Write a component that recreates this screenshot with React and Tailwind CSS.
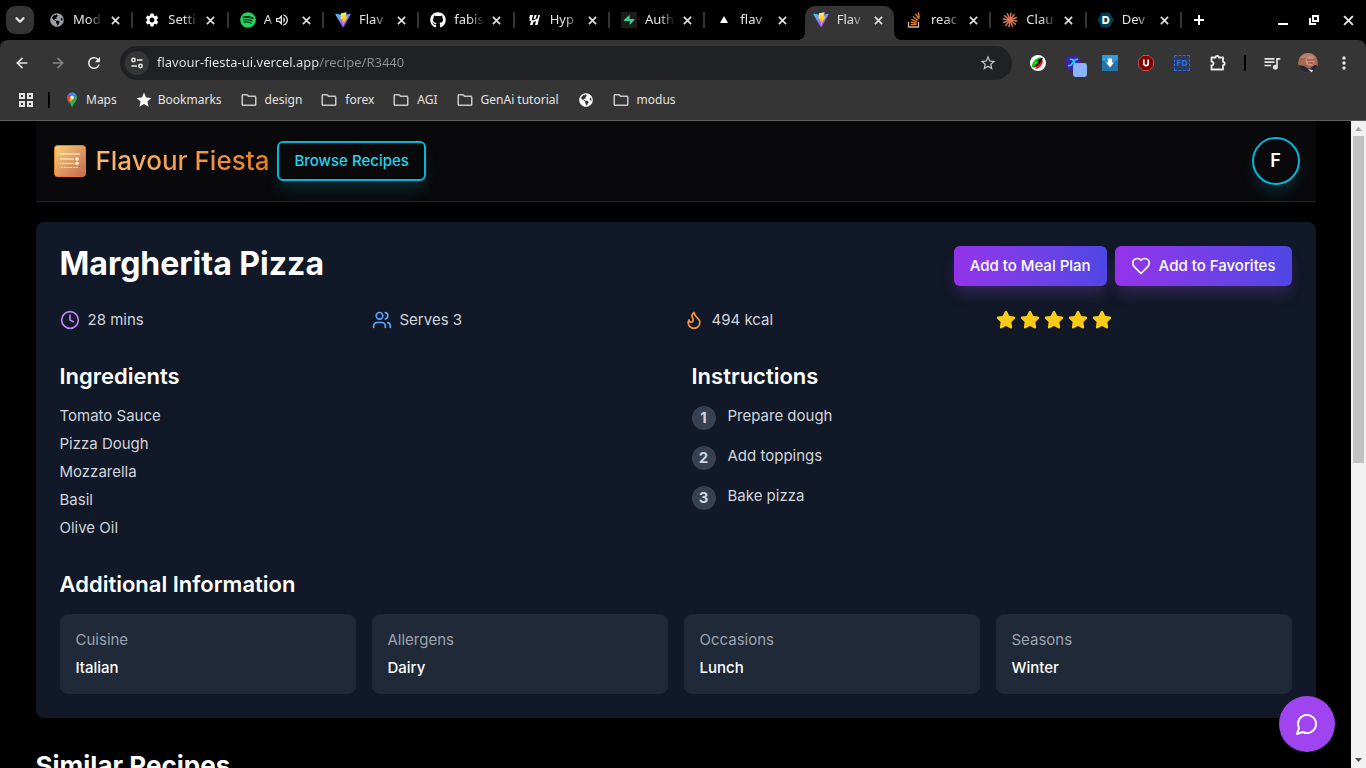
// recipe detail page shown inside a desktop browser window
import { Clock, Users, Flame, Star, ChevronDown, ArrowLeft, ArrowRight } from 'lucide-react';
import { FaSpotify, FaGithub, FaGlobeAmericas } from 'react-icons/fa';
import {
  MdSettings,
  MdRefresh,
  MdStar,
  MdStarBorder,
  MdOutlineFolder,
  MdQueueMusic,
  MdMoreVert,
  MdOutlineVolumeUp,
} from 'react-icons/md';

/* ---------- favicons and small logos ---------- */

function ViteLogo() {
  return (
    <svg viewBox="0 0 32 32" className="size-4">
      <defs>
        <linearGradient id="viteA" x1="0" y1="0" x2="0.6" y2="1">
          <stop offset="0" stopColor="#41d1ff" />
          <stop offset="1" stopColor="#bd34fe" />
        </linearGradient>
        <linearGradient id="viteB" x1="0.4" y1="0" x2="0.6" y2="1">
          <stop offset="0" stopColor="#ffea83" />
          <stop offset="0.3" stopColor="#ffdd35" />
          <stop offset="1" stopColor="#ffa800" />
        </linearGradient>
      </defs>
      <path d="M31.2 4.8 16.9 30.3a.8.8 0 0 1-1.4 0L.9 4.8a.8.8 0 0 1 .9-1.2l14.3 2.6 14.1-2.6a.8.8 0 0 1 1 1.2Z" fill="url(#viteA)" />
      <path d="M22.8.6 12.200 2.700a.4.4 0 0 0-.3.4l-.7 11a.4.4 0 0 0 .5.4l3-.7a.4.4 0 0 1 .5.5l-.9 4.300a.4.4 0 0 0 .5.5l1.800-.6a.4.4 0 0 1 .5.5l-1.400 6.800c-.1.4.5.7.7.3l8.700-17.200a.4.4 0 0 0-.4-.6l-3.100.6a.4.4 0 0 1-.4-.5l2-7a.4.4 0 0 0-.4-.5Z" fill="url(#viteB)" />
    </svg>
  );
}

function HypeLogo() {
  return (
    <svg viewBox="0 0 16 16" className="size-4" fill="#fff">
      <path d="M4 3h3L5.500 9H3.500l.6-2.500H3.100zM8 8l3.500-1.500L12.400 3H14l-2.500 10H9l1-4-2.600 1L6.600 13H4l1.200-4.200zM8.500 3h2.200L9.700 6.500 7.600 7.300z" />
    </svg>
  );
}

function SupabaseLogo() {
  return (
    <svg viewBox="0 0 16 16" className="size-4">
      <rect width="16" height="16" rx="1" fill="#1c1c1c" />
      <path d="M8.600 2.800v4.200h4.200c.6 0 .9.6.5 1L8.600 13V9H3.500c-.6 0-.9-.6-.5-1z" fill="#3ecf8e" />
    </svg>
  );
}

function VercelLogo() {
  return (
    <svg viewBox="0 0 16 16" className="size-4">
      <path d="M8 4l4 7H4z" fill="#fff" />
    </svg>
  );
}

function StackOverflowLogo() {
  return (
    <svg viewBox="0 0 16 16" className="size-4" fill="none" strokeWidth="1.300">
      <path d="M1.500 10v5h10v-5" stroke="#bcbbbb" />
      <path d="M3.500 12.500h6M3.600 10.200l6 1M4.300 7.300l5.600 2.300M5.900 4.500l4.900 3.700M8.500 2l3.700 4.900M11.200.500l1.200 5" stroke="#f48024" />
    </svg>
  );
}

const RAYS = [0, 30, 60, 90, 120, 150, 180, 210, 240, 270, 300, 330];

function ClaudeLogo() {
  return (
    <svg viewBox="0 0 16 16" className="size-4" stroke="#d97757" strokeWidth="1.500" strokeLinecap="round">
      {RAYS.map((deg) => (
        <line key={deg} x1="8" y1="8" x2="8" y2="1.200" transform={`rotate(${deg + 8} 8 8)`} />
      ))}
    </svg>
  );
}

function DevLogo() {
  return (
    <span className="flex size-4 items-center justify-center bg-[#003e54] font-['Inter'] text-[11px] font-extrabold text-white [clip-path:polygon(25%_5%,75%_5%,100%_50%,75%_95%,25%_95%,0_50%)]">
      D
    </span>
  );
}

function MapsPin() {
  return (
    <svg viewBox="0 0 16 16" className="size-4">
      <path d="M8 .5a5 5 0 0 1 5 5c0 4-3.500 5-5 10z" fill="#34a853" />
      <path d="M3.600 8C4.700 10.500 6.800 11.500 8 15.500c.8-3 2.400-4.500 3.600-6.200L8.500 6z" fill="#34a853" />
      <path d="M3.500 7.800 7 9.500l4-5-3-1z" fill="#fbbc04" />
      <path d="M3.600 8A5 5 0 0 1 4.200 2.300L8 5.500 4.500 9.500z" fill="#ea4335" />
      <path d="M4.200 2.300A5 5 0 0 1 12.300 3L9.500 6 8 5.500z" fill="#4285f4" />
      <circle cx="8" cy="5.500" r="1.700" fill="#fff" />
    </svg>
  );
}

function CloseIcon({ className }) {
  return (
    <svg viewBox="0 0 10 10" className={className} fill="none" stroke="currentColor" strokeWidth="1.800">
      <path d="M1 1l8 8M9 1L1 9" />
    </svg>
  );
}

const tabs = [
  { title: 'Mod', icon: <FaGlobeAmericas className="size-[14px] text-[#9aa0a6]" /> },
  { title: 'Setti', icon: <MdSettings className="size-4 text-white" /> },
  { title: 'A', icon: <FaSpotify className="size-4 text-[#1ed760]" />, audio: true },
  { title: 'Flav', icon: <ViteLogo /> },
  { title: 'fabis', icon: <FaGithub className="size-4 text-white" /> },
  { title: 'Hyp', icon: <HypeLogo /> },
  { title: 'Auth', icon: <SupabaseLogo /> },
  { title: 'flav', icon: <VercelLogo /> },
  { title: 'Flav', icon: <ViteLogo />, active: true },
  { title: 'reac', icon: <StackOverflowLogo /> },
  { title: 'Clau', icon: <ClaudeLogo /> },
  { title: 'Dev', icon: <DevLogo /> },
];

function Tab({ tab, divider }) {
  return (
    <div className="relative flex h-[34px] min-w-0">
      <div
        className={
          tab.active
            ? "relative mr-[2px] ml-1 flex min-w-0 flex-1 items-center rounded-t-[10px] bg-[#353535] pr-2 pb-[6px] pl-2 before:absolute before:bottom-0 before:-left-2 before:size-2 before:bg-[radial-gradient(circle_at_0_0,transparent_8px,#353535_8px)] after:absolute after:-right-2 after:bottom-0 after:size-2 after:bg-[radial-gradient(circle_at_100%_0,transparent_8px,#353535_8px)]"
            : 'flex min-w-0 flex-1 items-center pr-[10px] pb-[6px] pl-[11px]'
        }
      >
        <span className="flex size-4 shrink-0 items-center justify-center">{tab.icon}</span>
        <span className="ml-2 min-w-0 flex-1 text-[13px] whitespace-nowrap [mask-image:linear-gradient(to_right,#000_50%,transparent)]">
          {tab.title}
        </span>
        {tab.audio && <MdOutlineVolumeUp className="mr-1 size-4 shrink-0" />}
        <button type="button" aria-label="Close tab" className="ml-1 flex size-4 shrink-0 items-center justify-center">
          <CloseIcon className="size-[9px]" />
        </button>
      </div>
      {divider && <span className="absolute top-[6px] right-0 h-4 w-[2px] bg-[#353535]" />}
    </div>
  );
}

function TabStrip() {
  return (
    <div className="flex h-10 items-end bg-black">
      <div className="flex w-[38px] shrink-0 pb-[6px] pl-[6px]">
        <button type="button" aria-label="Search tabs" className="flex size-7 items-center justify-center rounded-[9px] bg-[#353535]">
          <ChevronDown className="size-[14px]" strokeWidth={4} />
        </button>
      </div>
      <div className="grid flex-1 grid-cols-12">
        {tabs.map((tab, i) => (
          <Tab key={i} tab={tab} divider={!tab.active && !tabs[i + 1]?.active} />
        ))}
      </div>
      <div className="flex h-10 w-[184px] shrink-0 items-center justify-between pr-[10px] pl-3">
        <button type="button" aria-label="New tab">
          <svg viewBox="0 0 10 10" className="size-[10px]" fill="none" stroke="#fff" strokeWidth="2">
            <path d="M5 0v10M0 5h10" />
          </svg>
        </button>
        <div className="flex items-center gap-5">
          <button type="button" aria-label="Minimize" className="flex size-[10px] items-end">
            <span className="h-[2px] w-[10px] bg-white" />
          </button>
          <button type="button" aria-label="Restore">
            <svg viewBox="0 0 12 12" className="size-3" fill="none" stroke="#fff" strokeWidth="2">
              <path d="M5 2h5v5H5zM2 4v6h6" />
            </svg>
          </button>
          <button type="button" aria-label="Close window" className="flex size-4 items-center justify-center">
            <CloseIcon className="size-[11px]" />
          </button>
        </div>
      </div>
    </div>
  );
}

/* extension icons, in toolbar order */
function Extensions() {
  const cell = 'flex h-8 w-9 shrink-0 items-center justify-center';
  return (
    <>
      <button type="button" aria-label="Colour picker" className={cell}>
        <svg viewBox="0 0 16 16" className="size-4">
          <circle cx="8" cy="8" r="8" fill="#fff" />
          <path d="M2 12C1.500 7 6 3 11 2L4 12z" fill="#0c0" />
          <path d="M5 14c4 0 8-4 8-9L8 8z" fill="#e11" />
          <path d="M3.500 13C4.500 8 9 3 12.500 2.500 13.500 5 9 10 3.500 13z" fill="#111" />
          <path d="M4 11.500 9 6l-4 1z" fill="#0f0" />
        </svg>
      </button>
      <button type="button" aria-label="Automation" className={cell}>
        <svg viewBox="0 0 28 28" className="size-7 shrink-0">
          <circle cx="13" cy="14" r="8" fill="#3f22a8" />
          <path d="m8 17 3-1 4-5 3-1M10 10l3 1 2 4" fill="none" stroke="#17d4e8" strokeWidth="1.800" />
          <rect x="13" y="14" width="14" height="14" rx="3" fill="#8ab4f8" />
        </svg>
      </button>
      <button type="button" aria-label="Downloader" className={cell}>
        <svg viewBox="0 0 16 16" className="size-4">
          <path d="M0 0h16v16H0z" fill="#2472a8" />
          <path d="M0 0h16v5l-8 4-8-4z" fill="#3498db" />
          <path d="M6 3.500h4v4h2l-4 5-4-5h2z" fill="#fff" />
        </svg>
      </button>
      <button type="button" aria-label="Ad blocker" className={cell}>
        <svg viewBox="0 0 16 16" className="size-4">
          <path d="M5 .5h6L15.500 5v6L11 15.500H5L.500 11V5z" fill="#800000" stroke="#b55" />
          <path d="M5.800 4.500v4a2.200 2.200 0 0 0 4.400 0v-4" fill="none" stroke="#fff" strokeWidth="1.700" />
        </svg>
      </button>
      <button type="button" aria-label="Form data" className={cell}>
        <span className="flex size-4 items-center justify-center border border-dashed border-[#2f6bdc] bg-[#2b3a5c] text-[9px] font-bold text-[#2f6bdc]">
          FD
        </span>
      </button>
      <button type="button" aria-label="Extensions" className={cell}>
        <svg viewBox="0 0 18 18" className="size-[18px]" fill="none" stroke="#e8eaed" strokeWidth="1.800" strokeLinejoin="round">
          <path d="M2.500 3.500h4a1.700 1.700 0 0 1 3.400 0h4.100v4.300a1.700 1.700 0 0 1 0 3.400v4.300H2.500v-4a2 2 0 0 0 0-4z" />
        </svg>
      </button>
    </>
  );
}

function Toolbar() {
  const cell = 'flex h-8 w-9 shrink-0 items-center justify-center';
  return (
    <div className="flex h-[46px] items-center px-1">
      <button type="button" aria-label="Back" className={cell}>
        <ArrowLeft className="size-4" strokeWidth={2.500} />
      </button>
      <button type="button" aria-label="Forward" className={cell}>
        <ArrowRight className="size-4 text-[#868686]" strokeWidth={2.500} />
      </button>
      <button type="button" aria-label="Reload" className={cell}>
        <MdRefresh className="size-[18px]" />
      </button>

      <div className="mx-2 flex h-[34px] min-w-0 flex-1 items-center rounded-full bg-[#202124] pr-[15px] pl-[5px]">
        <span className="flex size-6 shrink-0 items-center justify-center rounded-full bg-[#353535]">
          <svg viewBox="0 0 14 14" className="size-[14px]" fill="none" stroke="#e8eaed" strokeWidth="1.500">
            <circle cx="3.500" cy="4" r="1.700" />
            <path d="M7 4h5.500M1.500 10H7" />
            <circle cx="10.500" cy="10" r="1.700" />
          </svg>
        </span>
        {/* host part is bright, the path part is dimmed */}
        <input
          type="text"
          aria-label="Address"
          readOnly
          value="flavour-fiesta-ui.vercel.app/recipe/R3440"
          className="ml-2 min-w-0 flex-1 bg-[linear-gradient(to_right,#e8eaed_162px,#8d9094_162px)] bg-clip-text text-[13px] text-transparent outline-none"
        />
        <button type="button" aria-label="Bookmark this page">
          <MdStarBorder className="size-[18px] text-[#c7c7c7]" />
        </button>
      </div>

      <Extensions />
      <span className="mx-2 h-4 w-[2px] shrink-0 bg-black" />
      <button type="button" aria-label="Media" className={cell}>
        <MdQueueMusic className="size-5" />
      </button>
      <button type="button" aria-label="Profile" className={cell}>
        <svg viewBox="0 0 20 20" className="size-5 rounded-full">
          <path d="M0 0h20v20H0z" fill="#a5694f" />
          <path d="M0 0h20v5H0z" fill="#b97f62" />
          <circle cx="12" cy="8" r="4.500" fill="#c98f7c" />
          <path d="M9 7h7M10 10h5" stroke="#7a4036" />
          <path d="M0 12l6 1 5 3 6-4 3 1v7H0z" fill="#232838" />
          <path d="M10 16l5 1-1 3z" fill="#d8d8e0" />
        </svg>
      </button>
      <button type="button" aria-label="Menu" className={cell}>
        <MdMoreVert className="size-5" />
      </button>
    </div>
  );
}

const bookmarks = [
  { label: 'Maps', icon: <MapsPin /> },
  { label: 'Bookmarks', icon: <MdStar className="size-[18px] shrink-0 text-white" /> },
  { label: 'design', folder: true },
  { label: 'forex', folder: true },
  { label: 'AGI', folder: true },
  { label: 'GenAi tutorial', folder: true },
  { label: '', icon: <FaGlobeAmericas className="size-[14px] text-white" /> },
  { label: 'modus', folder: true },
];

function BookmarksBar() {
  return (
    <div className="flex h-[35px] items-center border-b border-[#5f5f5f] pb-[6px] pl-[18px]">
      <button type="button" aria-label="All apps">
        <svg viewBox="0 0 16 16" className="size-4" fill="none" stroke="#e3e3e3" strokeWidth="2">
          <path d="M2 2h4v4H2zM10 2h4v4h-4zM2 10h4v4H2zM10 10h4v4h-4z" />
        </svg>
      </button>
      <span className="mr-[14px] ml-[14px] h-4 w-[2px] bg-black" />
      <nav className="flex items-center gap-[19px]">
        {bookmarks.map((b, i) => (
          <a key={i} href="#" aria-label={b.label || 'Site'} className="flex items-center gap-[6px]">
            <span className="flex size-4 items-center justify-center">
              {b.folder ? <MdOutlineFolder className="size-[18px] shrink-0 text-[#c7c7c7]" /> : b.icon}
            </span>
            {b.label && <span className={b.folder ? 'pl-[2px]' : ''}>{b.label}</span>}
          </a>
        ))}
      </nav>
    </div>
  );
}

/* ---------- the recipe site ---------- */

function SiteHeader() {
  return (
    <header className="mx-auto flex h-[81px] max-w-7xl items-center justify-between border-b border-[#27272a] bg-[#09090b] px-4">
      <div className="flex items-center gap-2">
        <a href="#" className="flex items-center gap-2">
          <svg viewBox="0 0 36 36" className="size-9">
            <defs>
              <linearGradient id="logoFill" x1="0" y1="0" x2="1" y2="1">
                <stop offset="0" stopColor="#fbd27a" />
                <stop offset="1" stopColor="#c4684f" />
              </linearGradient>
            </defs>
            <rect x="2.500" y="2.500" width="31" height="31" rx="3" fill="url(#logoFill)" stroke="#e67e22" />
            <path d="M8 11h20M8 16h14M8 20.500h14" stroke="#fff3d6" strokeWidth="1.200" />
            <path d="M9 24.500h18" stroke="#fff3d6" strokeDasharray="2 1" />
            <circle cx="25" cy="16" r="1.800" fill="#fff3d6" />
            <circle cx="25" cy="20.500" r="1.800" fill="#fff3d6" />
          </svg>
          <span className="bg-gradient-to-r from-[#fdba74] to-[#e67e22] bg-clip-text text-[26px] leading-8 font-medium text-transparent">
            Flavour Fiesta
          </span>
        </a>
        <a
          href="#"
          className="flex h-10 items-center rounded-md border-2 border-[#06b6d4] px-[15px] font-medium text-[#22d3ee] shadow-[0_10px_15px_-3px_rgba(6,182,212,0.2)]"
        >
          Browse Recipes
        </a>
      </div>
      <button
        type="button"
        className="size-12 rounded-full border-2 border-[#06b6d4] text-lg font-semibold text-white shadow-[0_10px_15px_-3px_rgba(6,182,212,0.2)]"
      >
        F
      </button>
    </header>
  );
}

const ingredients = ['Tomato Sauce', 'Pizza Dough', 'Mozzarella', 'Basil', 'Olive Oil'];
const steps = ['Prepare dough', 'Add toppings', 'Bake pizza'];
const info = [
  ['Cuisine', 'Italian'],
  ['Allergens', 'Dairy'],
  ['Occasions', 'Lunch'],
  ['Seasons', 'Winter'],
];

function ActionButton({ children }) {
  return (
    <button
      type="button"
      className="flex h-10 items-center gap-2 rounded-md bg-gradient-to-r from-[#9333ea] to-[#4f46e5] px-4 font-medium text-white shadow-[0_10px_15px_-3px_rgba(168,85,247,0.25)]"
    >
      {children}
    </button>
  );
}

function SectionTitle({ children }) {
  return <h2 className="mb-4 text-[22px] leading-7 font-semibold text-white">{children}</h2>;
}

function RecipeCard() {
  return (
    <article className="rounded-lg bg-[#111827] p-6">
      <div className="mb-6 flex items-start justify-between">
        <h1 className="text-[32px] leading-9 font-bold text-white">Margherita Pizza</h1>
        <div className="flex gap-2">
          <ActionButton>Add to Meal Plan</ActionButton>
          <ActionButton>
            <svg viewBox="0 0 24 24" className="size-5" fill="none" stroke="currentColor" strokeWidth="2" strokeLinejoin="round">
              <path d="M19 14c1.490-1.460 3-3.210 3-5.500A5.500 5.500 0 0 0 16.500 3c-1.760 0-3 .5-4.500 2-1.500-1.500-2.740-2-4.500-2A5.500 5.500 0 0 0 2 8.500c0 2.300 1.500 4.050 3 5.500l7 7Z" />
            </svg>
            Add to Favorites
          </ActionButton>
        </div>
      </div>

      <div className="mb-8 grid grid-cols-4 gap-4">
        <div className="flex items-center gap-2">
          <Clock className="size-5 text-[#c084fc]" />
          28 mins
        </div>
        <div className="flex items-center gap-2">
          <Users className="size-5 text-[#60a5fa]" />
          Serves 3
        </div>
        <div className="flex items-center gap-2">
          <Flame className="size-5 text-[#fb923c]" />
          494 kcal
        </div>
        <div className="flex items-center gap-1" role="img" aria-label="5 out of 5">
          {[1, 2, 3, 4, 5].map((n) => (
            <Star key={n} className="size-5 fill-[#facc15] text-[#facc15]" />
          ))}
        </div>
      </div>

      <div className="mb-8 grid grid-cols-2 gap-8">
        <section>
          <SectionTitle>Ingredients</SectionTitle>
          <ul className="space-y-2">
            {ingredients.map((item) => (
              <li key={item}>{item}</li>
            ))}
          </ul>
        </section>
        <section>
          <SectionTitle>Instructions</SectionTitle>
          <ol className="space-y-4">
            {steps.map((step, i) => (
              <li key={step} className="flex items-start gap-3">
                <span className="flex size-6 items-center justify-center rounded-full bg-[#374151] font-bold">{i + 1}</span>
                {step}
              </li>
            ))}
          </ol>
        </section>
      </div>

      <SectionTitle>Additional Information</SectionTitle>
      <dl className="grid grid-cols-4 gap-4">
        {info.map(([name, value]) => (
          <div key={name} className="space-y-2 rounded-lg bg-[#1f2937] p-4">
            <dt className="text-[#9ca3af]">{name}</dt>
            <dd className="font-medium text-white">{value}</dd>
          </div>
        ))}
      </dl>
    </article>
  );
}

function Scrollbar() {
  return (
    <div className="flex w-[15px] shrink-0 flex-col items-center bg-[#f1f1f1]">
      <svg viewBox="0 0 15 15" className="size-[15px] shrink-0" fill="#a3a3a3">
        <path d="M4 10h7L7.500 6z" />
      </svg>
      <div className="flex w-full flex-1 flex-col px-[2px]">
        <div className="h-[53%] bg-[#c1c1c1]" />
      </div>
      <svg viewBox="0 0 15 15" className="size-[15px] shrink-0" fill="#505050">
        <path d="M4 5h7L7.500 9z" />
      </svg>
    </div>
  );
}

function App() {
  return (
    <div className="flex h-screen flex-col overflow-hidden bg-black font-['Noto_Sans',sans-serif] text-xs text-[#e3e3e3]">
      <TabStrip />
      {/* black behind the toolbar so its rounded top corners show */}
      <div className="shrink-0 rounded-t-lg bg-[#353535]">
        <Toolbar />
        <BookmarksBar />
      </div>

      <div className="flex min-h-0 flex-1">
        <div className="relative min-w-0 flex-1 overflow-hidden font-['Inter',sans-serif] text-[15px] leading-5 text-[#d1d5db]">
          <SiteHeader />
          <main className="mx-auto mt-5 max-w-7xl">
            <RecipeCard />
            <h2 className="mt-8 text-[26px] leading-8 font-bold text-white">Similar Recipes</h2>
          </main>

          {/* chat launcher floats over the page */}
          <button
            type="button"
            aria-label="Open chat"
            className="absolute right-4 bottom-4 flex size-14 items-center justify-center rounded-full bg-[#a044f0] text-white"
          >
            <svg viewBox="0 0 24 24" className="size-6" fill="none" stroke="currentColor" strokeWidth="2" strokeLinecap="round" strokeLinejoin="round">
              <path d="M7.900 20A9 9 0 1 0 4 16.100L2 22Z" />
            </svg>
          </button>
        </div>
        <Scrollbar />
      </div>
    </div>
  );
}

export default App;
